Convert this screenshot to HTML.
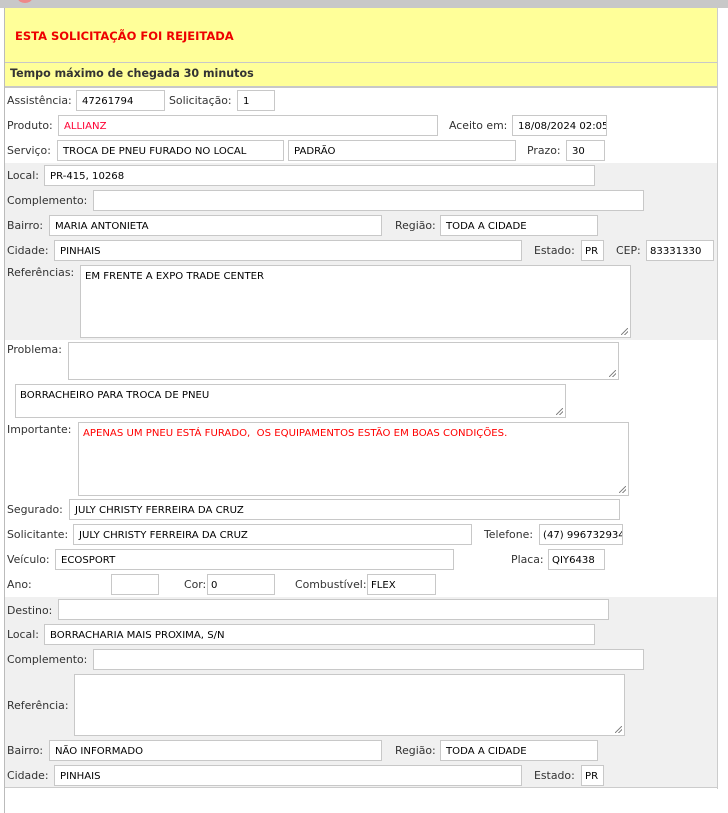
<!DOCTYPE html>
<html><head><meta charset="utf-8"><style>
body{margin:0;width:728px;height:813px;background:#fff;position:relative;overflow:hidden;font-family:"DejaVu Sans","Liberation Sans",sans-serif;font-size:10.4px;color:#333}
div,span{position:absolute;box-sizing:border-box}
.l{white-space:nowrap;line-height:12px;font-size:10.9px}
.i{border:1px solid #c8c8c8;background:#fff;height:21px;padding:4px 0 0 5px;color:#000;white-space:nowrap;overflow:hidden;line-height:13px;font-size:10.1px}
.t{border:1px solid #c8c8c8;background:#fff;padding:4px 0 0 4px;color:#000;line-height:13px;font-size:10.1px}
.t:after{content:"";position:absolute;right:2px;bottom:2px;width:7px;height:7px;background:linear-gradient(135deg,transparent 45%,#888 46%,#888 54%,transparent 55%,transparent 70%,#888 71%,#888 79%,transparent 80%)}
.g{background:#f0f0f0}
</style></head><body>
<div style="left:0;top:0;width:728px;height:8px;background:#c8c8c8"></div>
<div style="left:18px;top:-6px;width:14px;height:9px;border-radius:50%;background:#e88"></div>
<div style="left:4px;top:8px;width:713px;height:80px;background:#ffff99;border-bottom:2px solid #c8c8c8"></div>
<div style="left:4px;top:62px;width:713px;height:1px;background:#c8c8c8"></div>
<div class="l" style="left:15px;top:30px;color:#e00;font-weight:bold;font-size:11.5px">ESTA SOLICITAÇÃO FOI REJEITADA</div>
<div class="l" style="left:10px;top:68px;color:#333;font-weight:bold;font-size:11.1px">Tempo máximo de chegada 30 minutos</div>
<div style="left:4px;top:8px;width:1px;height:805px;background:#bbb"></div>
<div style="left:717px;top:8px;width:1px;height:781px;background:#ccc"></div>
<div class="g" style="left:5px;top:163px;width:712px;height:177px"></div>
<div class="g" style="left:5px;top:597px;width:712px;height:191px;border-bottom:1px solid #ccc"></div>

<div class="l" style="left:7px;top:95px">Assistência:</div><div class="i" style="left:76px;top:90px;width:89px">47261794</div>
<div class="l" style="left:169px;top:95px">Solicitação:</div><div class="i" style="left:237px;top:90px;width:38px">1</div>
<div class="l" style="left:7px;top:120px">Produto:</div><div class="i" style="left:58px;top:115px;width:380px;color:#f03">ALLIANZ</div>
<div class="l" style="left:449px;top:120px">Aceito em:</div><div class="i" style="left:512px;top:115px;width:95px">18/08/2024 02:05</div>
<div class="l" style="left:7px;top:145px">Serviço:</div><div class="i" style="left:57px;top:140px;width:227px">TROCA DE PNEU FURADO NO LOCAL</div>
<div class="i" style="left:288px;top:140px;width:228px">PADRÃO</div>
<div class="l" style="left:527px;top:145px">Prazo:</div><div class="i" style="left:566px;top:140px;width:39px">30</div>

<div class="l" style="left:7px;top:170px">Local:</div><div class="i" style="left:44px;top:165px;width:551px">PR-415, 10268</div>
<div class="l" style="left:7px;top:195px">Complemento:</div><div class="i" style="left:93px;top:190px;width:551px"></div>
<div class="l" style="left:7px;top:220px">Bairro:</div><div class="i" style="left:49px;top:215px;width:333px">MARIA ANTONIETA</div>
<div class="l" style="left:395px;top:220px">Região:</div><div class="i" style="left:440px;top:215px;width:158px">TODA A CIDADE</div>
<div class="l" style="left:7px;top:245px">Cidade:</div><div class="i" style="left:54px;top:240px;width:468px">PINHAIS</div>
<div class="l" style="left:534px;top:245px">Estado:</div><div class="i" style="left:581px;top:240px;width:23px;padding-left:3px">PR</div>
<div class="l" style="left:616px;top:245px">CEP:</div><div class="i" style="left:646px;top:240px;width:68px;padding-left:3px">83331330</div>
<div class="l" style="left:7px;top:267px">Referências:</div><div class="t" style="left:80px;top:265px;width:551px;height:73px">EM FRENTE A EXPO TRADE CENTER</div>

<div class="l" style="left:7px;top:344px">Problema:</div><div class="t" style="left:68px;top:342px;width:551px;height:38px"></div>
<div class="t" style="left:15px;top:384px;width:551px;height:34px">BORRACHEIRO PARA TROCA DE PNEU</div>
<div class="l" style="left:7px;top:424px">Importante:</div><div class="t" style="left:78px;top:422px;width:551px;height:74px;color:#f00">APENAS UM PNEU ESTÁ FURADO,&nbsp; OS EQUIPAMENTOS ESTÃO EM BOAS CONDIÇÕES.</div>
<div class="l" style="left:7px;top:504px">Segurado:</div><div class="i" style="left:69px;top:499px;width:551px">JULY CHRISTY FERREIRA DA CRUZ</div>
<div class="l" style="left:7px;top:529px">Solicitante:</div><div class="i" style="left:73px;top:524px;width:399px">JULY CHRISTY FERREIRA DA CRUZ</div>
<div class="l" style="left:484px;top:529px">Telefone:</div><div class="i" style="left:539px;top:524px;width:84px;padding-left:3px">(47) 996732934</div>
<div class="l" style="left:7px;top:554px">Veículo:</div><div class="i" style="left:55px;top:549px;width:399px">ECOSPORT</div>
<div class="l" style="left:511px;top:554px">Placa:</div><div class="i" style="left:548px;top:549px;width:57px;padding-left:3px">QIY6438</div>
<div class="l" style="left:7px;top:579px">Ano:</div><div class="i" style="left:111px;top:574px;width:48px"></div>
<div class="l" style="left:184px;top:579px">Cor:</div><div class="i" style="left:207px;top:574px;width:68px;padding-left:3px">0</div>
<div class="l" style="left:295px;top:579px">Combustível:</div><div class="i" style="left:367px;top:574px;width:69px;padding-left:3px">FLEX</div>

<div class="l" style="left:7px;top:605px">Destino:</div><div class="i" style="left:58px;top:599px;width:551px"></div>
<div class="l" style="left:7px;top:629px">Local:</div><div class="i" style="left:44px;top:624px;width:551px">BORRACHARIA MAIS PROXIMA, S/N</div>
<div class="l" style="left:7px;top:654px">Complemento:</div><div class="i" style="left:93px;top:649px;width:551px"></div>
<div class="l" style="left:7px;top:700px">Referência:</div><div class="t" style="left:74px;top:674px;width:551px;height:62px"></div>
<div class="l" style="left:7px;top:745px">Bairro:</div><div class="i" style="left:49px;top:740px;width:333px">NÃO INFORMADO</div>
<div class="l" style="left:395px;top:745px">Região:</div><div class="i" style="left:440px;top:740px;width:158px">TODA A CIDADE</div>
<div class="l" style="left:7px;top:770px">Cidade:</div><div class="i" style="left:54px;top:765px;width:468px">PINHAIS</div>
<div class="l" style="left:534px;top:770px">Estado:</div><div class="i" style="left:581px;top:765px;width:23px;padding-left:3px">PR</div>
</body></html>
